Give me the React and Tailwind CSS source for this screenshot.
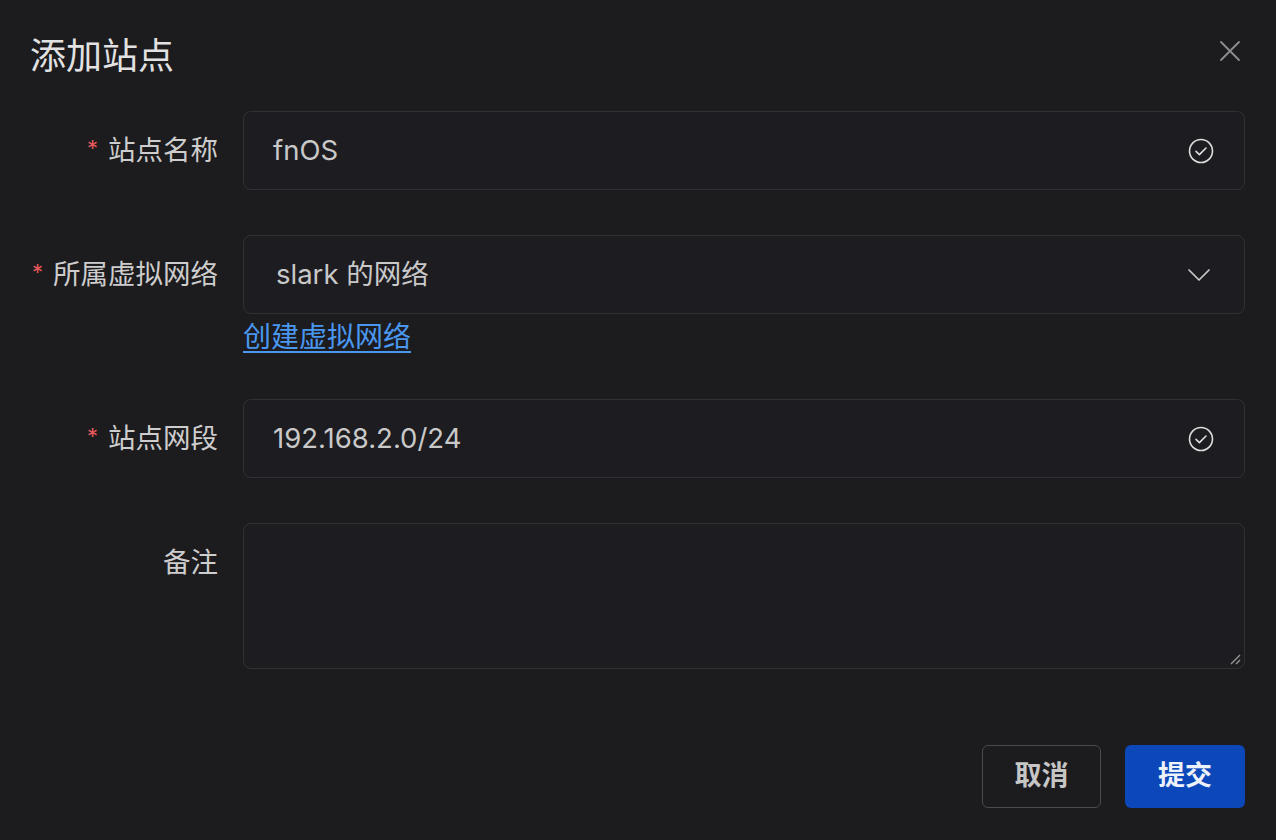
export default function App() {
  const font = { fontFamily: "'Inter', 'Noto Sans CJK SC', sans-serif" };

  const CheckCircle = () => (
    <svg width="26" height="26" viewBox="0 0 26 26" fill="none" className="shrink-0">
      <circle cx="13" cy="13" r="11.5" stroke="#dedede" strokeWidth="1.6" />
      <path d="M8 13.4l3.4 3.2L18 10" stroke="#dedede" strokeWidth="1.6" strokeLinecap="round" strokeLinejoin="round" />
    </svg>
  );

  const Label = ({ required, children }) => (
    <div className="w-[243px] shrink-0 pr-[25px] flex justify-end items-center h-[79px] text-[27.5px] text-[#cdcdcd]">
      {required && <span className="text-[#e4585a] text-[22px] mr-[10px] -mt-1">*</span>}
      {children}
    </div>
  );

  return (
    <div className="w-[1276px] h-[840px] bg-[#1c1b1e] relative overflow-hidden" style={font}>
      <div className="flex items-center justify-between pl-[30px] pr-[34px] pt-[34px]">
        <h1 className="text-[36px] leading-[44px] text-[#e2e2e2] font-normal">添加站点</h1>
        <svg width="24" height="24" viewBox="0 0 24 24" className="-mt-[10px]">
          <path d="M3 3l18 18M21 3L3 21" stroke="#8d8d8f" strokeWidth="1.8" strokeLinecap="round" />
        </svg>
      </div>

      <div className="pr-[31px] mt-[33px] flex flex-col">
        <div className="flex">
          <Label required>站点名称</Label>
          <div className="flex-1 h-[79px] rounded-[8px] border border-[#313035] bg-[#1d1c20] flex items-center pl-[29px] pr-[30px]">
            <span className="flex-1 text-[27.5px] text-[#c9c9c9]">fnOS</span>
            <CheckCircle />
          </div>
        </div>

        <div className="flex mt-[45px]">
          <Label required>所属虚拟网络</Label>
          <div className="flex-1 flex flex-col">
            <div className="h-[79px] rounded-[8px] border border-[#313035] bg-[#1d1c20] flex items-center pl-[32px] pr-[33px]">
              <span className="flex-1 text-[27.5px] text-[#c9c9c9]">slark 的网络</span>
              <svg width="24" height="14" viewBox="0 0 24 14" fill="none">
                <path d="M2 2l10 10L22 2" stroke="#c9c9c9" strokeWidth="1.7" strokeLinecap="round" strokeLinejoin="round" />
              </svg>
            </div>
            <a className="self-start mt-[3px] text-[28px] leading-[40px] text-[#4a97f0] underline underline-offset-[4px]">创建虚拟网络</a>
          </div>
        </div>

        <div className="flex mt-[42px]">
          <Label required>站点网段</Label>
          <div className="flex-1 h-[79px] rounded-[8px] border border-[#313035] bg-[#1d1c20] flex items-center pl-[29px] pr-[30px]">
            <span className="flex-1 text-[27.5px] text-[#c9c9c9]">192.168.2.0/24</span>
            <CheckCircle />
          </div>
        </div>

        <div className="flex mt-[45px]">
          <Label>备注</Label>
          <div className="flex-1 h-[146px] rounded-[8px] border border-[#313035] bg-[#1d1c20] relative">
            <svg width="12" height="12" viewBox="0 0 12 12" className="absolute right-[3px] bottom-[3px]">
              <path d="M2 11L11 2M7 11l4-4" stroke="#9a9a9c" strokeWidth="1.3" />
            </svg>
          </div>
        </div>

        <div className="flex justify-end gap-[24px] mt-[76px]">
          <button className="w-[119px] h-[63px] rounded-[6px] border border-[#4a494e] bg-[#1c1b1e] text-[27px] font-semibold text-[#c6c6c6]">取消</button>
          <button className="w-[120px] h-[63px] rounded-[6px] bg-[#0c48b9] text-[27px] font-semibold text-[#eef2fb]">提交</button>
        </div>
      </div>
    </div>
  );
}
